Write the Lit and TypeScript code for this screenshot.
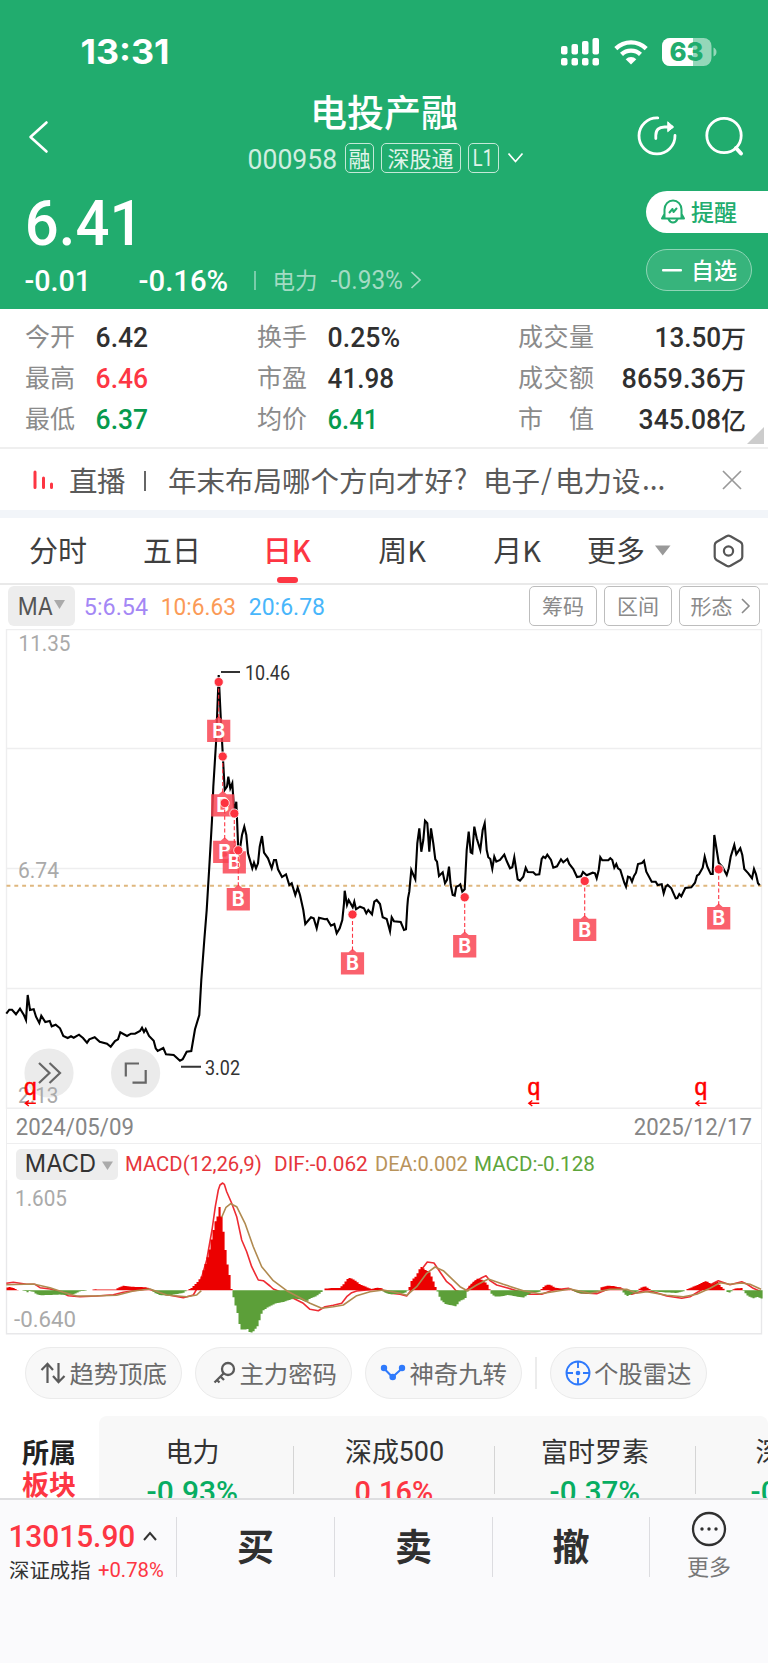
import { LitElement, html, svg, css } from "lit";
import { customElement, property } from "lit/decorators.js";

type Pt = [number, number];

const CAP = 0.711;

/** Numeric text condensed to a given ink width; the box is exactly cap-height tall. */
const fit = (text: string, width: number, size: number, cls = "") => {
  const h = Math.round(size * CAP);
  return html`<svg class="fit ${cls}" width=${width} height=${h}>
    <text x=${-size * 0.05} y=${h} font-size=${size} textLength=${width + size * 0.09} lengthAdjust="spacingAndGlyphs">${text}</text>
  </svg>`;
};

/** Chart series are stored in thirds of a pixel relative to an origin. */
const place = (ox: number, oy: number, raw: string): Pt[] =>
  raw.trim().split(/\s+/).map((p) => {
    const [x, y] = p.split(",").map(Number);
    return [ox + x / 3, oy + y / 3] as Pt;
  });
const toPoints = (pts: Pt[]) => pts.map(([x, y]) => `${x.toFixed(1)},${y.toFixed(1)}`).join(" ");

const PRICE: Pt[] = [
  ...place(0, 900, `19,341 28,329 36,329 48,343 60,326 72,346 78,360 83,285 90,330 101,328 108,350 118,369 124,347 136,366 149,363 155,379 167,374 180,385 190,408 203,414 213,409 221,413 237,404 249,414 261,428 268,418 284,412 299,425 321,431 332,440 345,423 354,418 361,397 381,408 393,401 405,401 420,393 426,383 432,396 437,387 447,408 461,422 467,445 473,453 490,444 498,463 521,465 540,482 548,478 560,455 574,453 585,388 598,345 604,240 613,120 620,30`),
  ...place(0, 620, `628,740 636,600 640,500 648,370 656,165 662,290 668,400 674,510 681,500 685,470 691,505 697,490 703,580 709,545 715,690 721,680 726,645 733,620 739,645 744,700 757,745 762,728 768,745 774,730 779,680 786,648 792,698 804,715 815,745 822,720 828,720 834,748 846,771 858,763 868,795 875,790 886,825 893,803 900,825 910,870`),
  ...place(0, 900, `916,72 933,52 941,55 950,85 957,53 975,58 981,57 993,77 1003,72 1010,100 1019,85 1027,60 1032,10`),
  ...place(0, 620, `1034,812 1041,855 1046,840 1058,862 1063,845 1068,868 1080,860 1092,865 1099,880 1105,870 1116,883 1123,845 1130,840 1140,852`),
  ...place(380, 900, `8,52 20,57 30,94 35,52 42,64 62,66 72,90 78,88 82,20`),
  ...place(380, 620, `84,835 88,815 94,750 106,778 112,670 118,625 124,695 130,660 135,602 142,610 148,695 153,625 160,670 166,718 171,725 177,768 188,757 195,790 201,780 207,740 212,795 218,825 224,827 229,800 236,797 241,793 247,815 254,808 260,690 266,635 272,697 277,700 283,620 290,655 301,690 308,630 314,610 320,690 325,712 331,717 337,746 343,710 349,725 360,720 373,704 380,723 390,745 397,742 403,712 413,778 420,782 430,770 437,743 443,756 460,757 467,764 478,763 485,717 490,710 496,714 502,704 513,720 520,743 531,739 543,718 550,727 562,717 568,732 580,747 591,771 603,769 609,756 620,766 638,758 645,760 650,775 656,750 661,712 667,721 685,721 691,715 697,720 703,743 709,732 714,745 721,750 733,788 738,800 744,770 750,772 756,785 762,768 768,758 774,732 786,729 792,722 799,755 815,785 827,785 833,795 845,793 851,820 857,800 863,795 874,805 887,835 892,834 898,822 904,829 916,804 934,802 945,788 951,767 957,763 968,743 974,710 982,740 992,762 998,762 1003,645 1010,690 1016,728 1028,742 1040,765 1046,745 1052,710 1063,675 1069,703 1081,685 1087,705 1093,747 1105,760 1116,775 1122,747 1128,763 1134,790 1139,796`),
];

const MARKS: Pt[] = [
  [218.7, 682], [222.7, 756.5], [224.7, 803], [234.3, 813.5], [238.3, 850.3],
  [352.5, 914.5], [464.7, 897.3], [584.7, 881], [718.7, 869.3],
];

const HIST: Pt[] = [
  ...place(0, 0, `19,8 30,10 45,5 55,0 78,-2 81,-8 85,-2 100,-4 110,-12 120,-15 180,-13 200,-14 225,-10 240,-3 270,0 285,3 320,2 345,2 360,10 372,14 390,11 440,9 452,2 465,-8 478,-14 500,-16 520,-13 550,-8 560,0 575,7 590,22 604,40 612,65 620,90 628,120 636,160 646,206 654,225 657,250 661,250 664,225 670,180 676,125 682,80 690,38 694,5 698,-5 702,-30 712,-65 718,-100 724,-118 738,-118 742,-115 748,-125 757,-127 766,-116 775,-105 782,-75 790,-60 805,-50 825,-40 850,-35 880,-25 900,-27 918,-35 930,-25 950,-17 965,-5 975,5 1000,7 1020,7 1032,20 1040,32 1050,38 1065,30 1080,18 1100,10 1115,3 1130,8`),
  ...place(380, 0, `5,6 12,-6 30,-12 60,-10 80,-6 88,8 96,32 108,42 118,62 122,72 135,62 148,55 155,40 163,20 168,5 173,-5 182,-28 197,-42 215,-45 228,-48 240,-32 256,-25 262,-5 267,12 280,25 292,35 310,30 322,18 328,5 332,-8 345,-19 365,-18 385,-14 400,-17 430,-22 450,-10 480,-4 485,5 498,16 510,17 525,8 545,4 570,2 585,-4 605,-10 650,-8 660,0 664,9 685,14 705,12 725,4 732,-10 742,-17 760,-10 774,-3 780,7 795,12 808,4 815,-3 850,-6 890,-8 910,-3 920,3 950,15 978,28 995,18 1012,26 1022,12 1032,3 1038,-2 1047,-8 1056,-2 1062,5 1085,7 1092,-4 1105,-18 1120,-24 1132,-20 1145,-25`),
];

const DIF: Pt[] = [
  ...place(0, 1140, `19,430 40,427 80,433 105,433 120,443 150,447 180,455 205,467 240,470 290,468 340,464 370,457 400,452 445,446 480,460 510,466 550,473 580,465 600,430 620,360 636,270 646,200 655,150 660,135 668,129 673,133 680,155 695,190 710,230 725,300 740,335 755,380 775,420 790,422 810,438 820,447 840,455 860,460 880,475 910,490 930,508 955,512 975,500 1000,496 1025,490 1040,470 1055,458 1070,453 1100,450 1140,447`),
  ...place(380, 1140, `30,460 60,463 80,468 90,455 110,420 130,382 142,366 162,369 180,396 200,425 215,437 228,452 250,458 265,445 285,425 305,413 318,407 330,422 350,435 380,443 410,452 440,463 485,463 520,450 565,445 600,458 650,461 690,445 720,443 755,463 790,452 820,455 860,468 905,475 930,470 955,455 980,440 1000,430 1015,422 1050,434 1085,425 1100,432 1120,445 1143,455`),
];
const DEA: Pt[] = [
  ...place(0, 1140, `19,434 100,432 150,443 190,457 230,468 280,468 350,466 400,453 450,447 500,465 560,470 590,465 604,452`),
  ...place(0, 1140, `665,232 678,202 692,191 710,200 735,250 760,320 785,380 820,422 860,452 900,473 930,490 965,505 1000,500 1030,495 1070,467 1110,455`),
  ...place(380, 1140, `10,450 60,460 80,466 110,440 140,400 165,381 190,392 240,440 262,452 290,435 325,417 370,433 430,452 480,461 520,455 570,447 630,460 690,448 740,448 770,460 800,455 860,466 910,470 950,463 990,445 1020,428 1050,433 1085,429 1110,433 1143,448`),
];

const heightAt = (x: number): number => {
  for (let i = 1; i < HIST.length; i++) {
    const [x1, y1] = HIST[i];
    const [x0, y0] = HIST[i - 1];
    if (x <= x1) return y0 + ((y1 - y0) * (x - x0)) / (x1 - x0);
  }
  return HIST[HIST.length - 1][1];
};
const ZERO = 1290.3;
const bars = (up: boolean): string => {
  let d = "";
  for (let x = 6.5; x < 761; x += 2) {
    const v = heightAt(x + 1);
    if (Math.abs(v) < 0.35 || v > 0 !== up) continue;
    d += `M${x} ${ZERO}V${(ZERO - v).toFixed(1)}h2.1V${ZERO}z`;
  }
  return d;
};

@customElement("price-chart")
class PriceChart extends LitElement {
  static styles = css`
    :host { display: block; height: 480px; }
    svg { display: block; font-family: Roboto, "Noto Sans", sans-serif; }
    .b { font-family: Inter, sans-serif; font-weight: 700; fill: #fff; font-size: 19.5px; text-anchor: middle; }
    .axis { fill: #aaa; font-size: 22.5px; }
    .tag { fill: #333; font-size: 20px; }
    .q { fill: #f00; stroke: #f00; stroke-width: 0.5; font-family: "Liberation Sans", sans-serif; font-size: 23px; text-anchor: middle; }
  `;
  render() {
    return html`<svg width="768" height="480" viewBox="0 629 768 480">
      <g fill="none" stroke="#eeeeef" stroke-width="1.4">
        <path d="M6.5 1109V629.5H761.5V1109M6.5 748.5H761.5M6.5 868.5H761.5M6.5 988.5H761.5M6.5 1108.3H761.5" />
      </g>
      <path d="M6.5 885.7H761.5" stroke="#dfb77e" stroke-width="2.1" stroke-dasharray="3.9 3.93" />
      <polyline points=${toPoints(PRICE)} fill="none" stroke="#000" stroke-width="2.1" stroke-linejoin="miter" stroke-miterlimit="6" />
      ${MARKS.map(([x, y]) => svg`
        <path d="M${x - 11.6} ${y + 37.8}h7.6l4 -3.6l4 3.6h7.6v22.3h-23.2z" fill="#f94351" fill-opacity=".84" />
        <path d="M${x} ${y}v36" stroke="#fd3643" stroke-width="1.1" stroke-dasharray="4 2.4" />
        <text class="b" x=${x} y=${y + 55.6}>B</text>
        <circle cx=${x} cy=${y} r="4.6" fill="#fd3340" stroke="#fff" stroke-width=".8" />`)}
      <path d="M221 672H240M181 1066.7H201" stroke="#333" stroke-width="2" />
      <g fill="#ebebeb">
        <circle cx="49" cy="1073" r="24.6" /><circle cx="135.6" cy="1073" r="24.6" />
      </g>
      <g fill="none" stroke="#666" stroke-width="2.2">
        <path d="M39 1063l10.500 10l-10.500 10M49.500 1063l10.500 10l-10.500 10" />
        <path d="M139 1063.500H125.800V1076.500M132.500 1082.600H145.700V1070" />
      </g>
      <text class="axis" x="18.500" y="651" textLength="52" lengthAdjust="spacingAndGlyphs">11.35</text>
      <text class="axis" x="18" y="877.500" textLength="41" lengthAdjust="spacingAndGlyphs">6.74</text>
      <text class="axis" x="18" y="1103" textLength="40.500" lengthAdjust="spacingAndGlyphs">2.13</text>
      <text class="tag" x="245" y="680" textLength="45" lengthAdjust="spacingAndGlyphs">10.46</text>
      <text class="tag" x="205" y="1075" textLength="35" lengthAdjust="spacingAndGlyphs">3.02</text>
      ${[30.3, 533.8, 701].map((x) => svg`
        <text class="q" x=${x} y="1094.600">q</text>
        <path d="M${x + 5.5} 1103.3H${x - 4}M${x - 1.5} 1100.5L${x - 5} 1103.3L${x - 1.5} 1106" fill="none" stroke="#f00" stroke-width="1.4" />`)}
    </svg>`;
  }
}

@customElement("macd-chart")
class MacdChart extends LitElement {
  static styles = css`
    :host { display: block; height: 155px; }
    svg { display: block; font-family: Roboto, sans-serif; }
    .axis { fill: #aaa; font-size: 22px; }
  `;
  render() {
    return html`<svg width="768" height="155" viewBox="0 1180 768 155">
      <path d="M6.500 1180V1333.700H761.500V1180" fill="none" stroke="#e8e8ea" stroke-width="1.400" />
      <g fill="none" stroke-width="1.600" stroke-linejoin="round">
        <polyline points=${toPoints(DIF)} stroke="#ee2b33" />
        <path d=${bars(true)} fill="#ec0000" /><path d=${bars(false)} fill="#5c9f39" />
        <polyline points=${toPoints(DEA.slice(0, 13))} stroke="#b08a50" />
        <polyline points=${toPoints(DEA.slice(13))} stroke="#b08a50" />
      </g>
      <text class="axis" x="15" y="1205.800" textLength="52" lengthAdjust="spacingAndGlyphs">1.605</text>
      <text class="axis" x="14" y="1327" textLength="62" lengthAdjust="spacingAndGlyphs">-0.640</text>
    </svg>`;
  }
}

@customElement("stat-item")
class StatItem extends LitElement {
  @property() label = "";
  @property() value = "";
  @property() unit = "";
  @property() tone = "";
  @property({ type: Number }) w = 50;
  @property({ type: Boolean }) wide = false;
  static styles = css`
    :host { display: flex; align-items: center; height: 41px; line-height: 38px; }
    .label { width: 50px; margin-left: -1px; margin-right: 22px; font-size: 25px; color: #8b8b8b; white-space: nowrap; display: flex; justify-content: space-between; padding-bottom: 3px; }
    :host([wide]) .label { width: 76px; }
    .value { display: flex; align-items: center; fill: #303030; color: #303030; padding-top: 1px; }
    :host([wide]) .value { margin-left: auto; }
    .unit { font-size: 25px; font-weight: 500; margin-left: 1px; margin-right: -1px; line-height: 38px; }
    .up { fill: #fd3643; }
    .down { fill: #069a4e; }
    .fit { display: block; overflow: visible; font-family: Roboto, sans-serif; font-weight: 500; }
  `;
  render() {
    return html`<span class="label">${[...this.label].map((c) => html`<span>${c}</span>`)}</span>
      <span class="value ${this.tone}">${fit(this.value, this.w, 28)}${this.unit ? html`<span class="unit">${this.unit}</span>` : ""}</span>`;
  }
}

@customElement("app-root")
class AppRoot extends LitElement {
  static styles = css`
    :host { display: block; width: 768px; height: 1663px; overflow: hidden; background: #fff; font-family: "Noto Sans CJK SC", "Noto Sans", sans-serif; color: #333; box-sizing: border-box; }
    * { box-sizing: border-box; }
    svg { display: block; flex: none; overflow: visible; }
    .fit { font-family: Roboto, sans-serif; fill: currentColor; }
    .med { font-weight: 500; }
    .row { display: flex; align-items: center; }

    .head { height: 309px; background: #21ac6e; color: #fff; display: flex; flex-direction: column; }
    .status { height: 90px; padding: 13px 51px 0 82px; justify-content: space-between; }
    .sys { gap: 14px; }
    .nav { display: grid; grid-template-columns: 120px 1fr 120px; height: 90px; }
    .back { padding: 30px 0 0 28px; }
    .heading { display: flex; flex-direction: column; align-items: center; }
    .name { font-size: 37px; line-height: 42px; height: 51px; font-weight: 500; }
    .code { gap: 8px; height: 33px; padding-left: 5px; }
    .code .num { color: #d0eee0; margin-right: 1px; margin-top: 3px; }
    .badge { height: 30px; border: 1.5px solid #c4e9d8; border-radius: 5px; font-size: 22px; line-height: 24px; padding: 0 2px 2px; color: #e0f4ea; display: flex; align-items: center; justify-content: center; }
    .badge.wide { padding: 0 6px 2px; margin-left: -1px; }
    .badge.lv { width: 31px; margin-left: -1px; padding-bottom: 0; }
    .tools { display: flex; justify-content: flex-end; gap: 27px; padding: 26px 24px 0 0; margin-left: -20px; }
    .quote { display: flex; justify-content: space-between; flex: 1; }
    .left { padding: 20px 0 0 26px; }
    .left .price { margin-left: 2px; }
    .change { margin-top: 18px; height: 34px; }
    .sep { width: 1.5px; height: 19px; background: #7accaa; margin: 0 17px 0 27px; }
    .sector { font-size: 22.5px; line-height: 30px; color: #a3dbc3; gap: 14px; padding-bottom: 3px; }
    .sector svg.fit { margin-top: 3px; }
    .sector .go { margin-left: -6px; margin-top: 2px; }
    .gap { width: 50px; }
    .right { width: 122px; padding-top: 11px; display: flex; flex-direction: column; gap: 17px; }
    .remind { height: 42px; background: #fff; color: #21ac6e; border-radius: 21px 0 0 21px; padding: 0 0 2px 14px; gap: 5px; font-size: 23px; line-height: 36px; font-weight: 500; }
    .own { width: 106px; height: 42px; margin-top: -1px; border: 1.5px solid #8fd5b6; background: #37b47c; border-radius: 21px; padding: 0 0 2px 15px; gap: 9px; font-size: 23px; line-height: 36px; font-weight: 500; }

    .stats { display: grid; grid-template-columns: 232px 261px 226px; padding: 7px 0 0 26px; height: 140px; border-bottom: 2px solid #efefef; align-content: start; position: relative; }
    .corner { position: absolute; right: 4px; bottom: 3px; }
    .live { height: 61px; padding: 0 27px 0 32px; font-size: 28.5px; color: #5a5a5a; white-space: pre; line-height: 56px; }
    .live .tag { margin-left: 15px; letter-spacing: -0.5px; }
    .live .bar { width: 2px; height: 20px; background: #666; margin: 2px 22px 0 19px; }
    .live .msg { flex: 1; display: flex; }
    .band { height: 8px; background: #f2f5f9; }

    .tabs { height: 67px; border-bottom: 2px solid #e9e9e9; padding: 0 24px 0 29px; font-size: 29px; color: #3f3f3f; }
    .tab { height: 65px; line-height: 63px; display: flex; flex-direction: column; align-items: center; width: 58px; white-space: nowrap; margin-left: 57px; }
    .tab:first-child { margin-left: 0; }
    .tab.next { margin-left: 56px; }
    .tab.drop { margin-left: 41px; margin-right: 10px; }
    .tab.on { color: #fd3643; font-weight: 500; }
    .tab.on::after { content: ""; width: 21px; height: 6px; border-radius: 3px; background: #fd3643; margin-top: -4px; flex: none; }
    .cog { margin-left: auto; }
    .ma { height: 44px; padding: 1px 8px 3px 8px; gap: 10px; }
    .pick { width: 67px; height: 40px; border-radius: 6px; background: #ededed; color: #555; display: flex; align-items: center; justify-content: center; gap: 2px; }
    .pick .caret { margin-top: -3px; }
    .inter { font-family: Inter, sans-serif; }
    .v5 { color: #a487f5; margin-right: 5px; }
    .v10 { color: #fb9a57; margin-right: 5px; }
    .v20 { color: #48b6fb; }
    .outs { margin-left: auto; display: flex; gap: 7px; }
    .out { width: 68px; height: 40px; border: 1.5px solid #bdbdbd; border-radius: 5px; font-size: 21px; color: #8a8a8a; line-height: 33px; padding-bottom: 2px; display: flex; align-items: center; justify-content: center; gap: 8px; }
    .out.more { width: 81px; }
    .out.more svg { margin: 2px -1px 0 0; }
    .dates { margin: 0 6px; padding: 2px 10px 0; height: 35px; border: solid #eeeeef; border-width: 0 1.4px 1.4px; justify-content: space-between; color: #868686; }
    .ind { margin: 0 6px; height: 36px; padding: 4px 0 0 9px; border: solid #eeeeef; border-width: 0 1.4px; gap: 8px; }
    .mpick { width: 102px; height: 31px; border-radius: 5px; background: #ededed; color: #333; display: flex; align-items: center; padding: 0 0 1px 10px; gap: 7px; }
    .mpick .caret { margin-top: 3px; }
    .ind .a { color: #e6353b; } .ind .c { color: #b8935a; } .ind .d { color: #5da53b; }
    .ind .dif { margin-left: 6px; margin-right: 1px; }

    .pills { padding: 12px 0 0 25px; height: 81px; align-items: flex-start; gap: 13px; }
    .pill { width: 157px; height: 52px; border-radius: 26px; border: 1.5px solid #ebebeb; background: #f8f8f8; font-size: 24.4px; line-height: 46px; color: #6b6b6b; display: flex; align-items: center; justify-content: flex-end; padding: 0 14px 1px 0; gap: 3px; white-space: nowrap; }
    .vsep { width: 1.5px; height: 32px; background: #ececec; margin: 10px 0 0; }
    .sectors { height: 82px; display: flex; overflow: hidden; }
    .own-t { width: 99px; padding: 20px 0 0 22px; font-weight: 700; font-size: 27px; line-height: 32px; color: #222; flex: none; }
    .panel { flex: 1; background: #f8f8f8; border-radius: 8px 8px 0 0; overflow: hidden; display: flex; }
    .items { display: flex; margin-left: -7px; flex: none; }
    .it { width: 201px; flex: none; display: flex; flex-direction: column; align-items: center; font-size: 27px; line-height: 36px; padding-top: 17px; }
    .it .nm { height: 48px; display: flex; align-items: center; gap: 1px; padding-bottom: 12px; }
    .it + .it { border-image: linear-gradient(to bottom, transparent 30px, #d5d5d5 30px, #d5d5d5 77px, transparent 77px) 1; border-style: solid; border-width: 0 0 0 1.5px; }
    .g { color: #08ad62; } .r { color: #fd3643; }

    .bar-b { height: 165px; background: #fafafc; border-top: 2px solid #dedee0; display: flex; padding-top: 17px; }
    .idx { width: 176px; height: 60px; padding: 7px 0 0 10px; flex: none; }
    .idx .top { gap: 9px; }
    .idx .bot { margin-top: 7px; font-size: 20.4px; line-height: 30px; gap: 8px; margin-left: -1px; }
    .act { width: 158px; height: 60px; border-left: 1.5px solid #dcdce0; font-size: 37px; line-height: 57px; font-weight: 700; text-align: center; color: #303030; }
    .act.last { width: 157px; }
    .morebtn { flex: 1; height: 60px; border-left: 1.5px solid #dcdce0; display: flex; flex-direction: column; align-items: center; font-size: 22px; color: #777; line-height: 32px; }
    .morebtn svg { margin: -6px 0 2px; }
  `;

  render() {
    return html`
      <div class="head">
        <div class="status row">
          <svg width="88" height="26"><text x="-1.500" y="25" font-family="Inter" font-weight="700" font-size="33.500" fill="#fff" textLength="89" lengthAdjust="spacingAndGlyphs">13:31</text></svg>
          <div class="sys row">
            <svg width="39" height="28" fill="#fff">
              <rect x="0" y="8" width="6.500" height="8.500" rx="2" /><rect x="10.500" y="6" width="6.500" height="10.500" rx="2" /><rect x="21" y="3" width="6.500" height="13.500" rx="2" /><rect x="31.500" y="0" width="6.500" height="16.500" rx="2" />
              <rect x="0" y="20" width="6.500" height="7.500" rx="2" /><rect x="10.500" y="20" width="6.500" height="7.500" rx="2" /><rect x="21" y="20" width="6.500" height="7.500" rx="2" /><rect x="31.500" y="20" width="6.500" height="7.500" rx="2" />
            </svg>
            <svg width="34" height="26" viewBox="0 0 34 26" fill="none" stroke="#fff" stroke-width="4.300">
              <path d="M1.800 9.600A21.800 21.800 0 0 1 32.200 9.600" /><path d="M7.500 15.400A13.600 13.600 0 0 1 26.500 15.400" />
              <path d="M17 25.500L11.700 20.200A7.600 7.600 0 0 1 22.300 20.200z" fill="#fff" stroke="none" />
            </svg>
            <svg width="55" height="28" viewBox="0 0 55 28">
              <rect width="49.500" height="28" rx="8" fill="#fff" fill-opacity=".52" />
              <path d="M8 0H31V28H8A8 8 0 0 1 0 20V8A8 8 0 0 1 8 0z" fill="#fff" />
              <path d="M51.500 9.500Q54.500 11 54.500 14T51.500 18.500z" fill="#fff" fill-opacity=".52" />
              <text x="7.500" y="23.300" font-family="Inter" font-weight="800" font-size="26" fill="#21ac6e" textLength="34" lengthAdjust="spacingAndGlyphs">63</text>
            </svg>
          </div>
        </div>
        <div class="nav">
          <div class="back"><svg width="22" height="34" fill="none" stroke="#fff" stroke-width="2.600" stroke-linecap="round" stroke-linejoin="round"><path d="M18.500 2.500L2.500 17L18.500 31.500" /></svg></div>
          <div class="heading">
            <div class="name">电投产融</div>
            <div class="code row">
              ${fit("000958", 87, 28, "num")}
              <span class="badge">融</span><span class="badge wide">深股通</span><span class="badge lv">${fit("L1", 18, 23)}</span>
              <svg width="17" height="12" fill="none" stroke="#fff" stroke-width="1.700"><path d="M1.500 1.500L8.500 9.500L15.500 1.500" /></svg>
            </div>
          </div>
          <div class="tools">
            <svg width="40" height="40" fill="none" stroke="#fff" stroke-width="2.800" stroke-linecap="round" stroke-linejoin="round">
              <path d="M20.800 1.900A18 18 0 1 0 38 19.500" /><path d="M18.800 22.500V19.500Q18.800 11 27.500 11H35" /><path d="M31 6L36.500 11L31 15.500z" fill="#fff" stroke-width="1" />
            </svg>
            <svg width="40" height="40" fill="none" stroke="#fff" stroke-width="2.800" stroke-linecap="round"><circle cx="20" cy="19.500" r="17.200" /><path d="M32 32L37 37.500" stroke-width="4" /></svg>
          </div>
        </div>
        <div class="quote">
          <div class="left">
            ${fit("6.41", 113, 63.5, "med price")}
            <div class="change row">
              ${fit("-0.01", 64, 29.5, "med")}<span class="gap"></span>${fit("-0.16%", 87, 29.5, "med")}
              <span class="sep"></span>
              <div class="sector row"><span>电力</span>${fit("-0.93%", 70, 25)}<svg class="go" width="12" height="18" fill="none" stroke="#a3dbc3" stroke-width="1.700"><path d="M1.500 1L10 9L1.500 17" /></svg></div>
            </div>
          </div>
          <div class="right">
            <div class="remind row">
              <svg width="26" height="26" fill="none" stroke="#21ac6e" stroke-width="2" stroke-linejoin="round" stroke-linecap="round">
                <path d="M4.500 20V11.500A8.500 9 0 0 1 21.500 11.500V20M2 20.500H24M4.500 16L2 20.500M21.500 16L24 20.500" /><path d="M8.500 21Q10 24.500 13 24.500T17.500 21" /><path d="M9.500 14.500L12.500 11L13.500 14L16.500 10.500" />
              </svg>提醒
            </div>
            <div class="own row"><svg width="20" height="3"><rect width="20" height="2.400" y="1" rx="1" fill="#fff" /></svg>自选</div>
          </div>
        </div>
      </div>

      <div class="stats">
        <stat-item label="今开" value="6.42" w="50"></stat-item><stat-item label="换手" value="0.25%" w="70"></stat-item><stat-item wide label="成交量" value="13.50" w="64" unit="万"></stat-item>
        <stat-item label="最高" value="6.46" w="50" tone="up"></stat-item><stat-item label="市盈" value="41.98" w="64"></stat-item><stat-item wide label="成交额" value="8659.36" w="97" unit="万"></stat-item>
        <stat-item label="最低" value="6.37" w="50" tone="down"></stat-item><stat-item label="均价" value="6.41" w="48" tone="down"></stat-item><stat-item wide label="市值" value="345.08" w="80" unit="亿"></stat-item>
        <svg class="corner" width="17" height="17"><path d="M17 0V17H0z" fill="#ccc" /></svg>
      </div>

      <div class="live row">
        <svg width="22" height="20" stroke="#fd3643" stroke-width="3" stroke-linecap="round"><path d="M3 2V17.500M11.500 8V17.500M19.500 14V17.500" /></svg>
        <span class="tag">直播</span><span class="bar"></span>
        <span class="msg"><span>年末布局哪个方向才好</span>${cell("?", 30, 28)}<span>电子</span>${cell("/", 15, 28)}<span>电力设</span>${cell("...", 30, 28)}</span>
        <svg width="18" height="18" stroke="#999" stroke-width="1.700"><path d="M0 0L18 18M18 0L0 18" /></svg>
      </div>
      <div class="band"></div>

      <div class="tabs row">
        <div class="tab">分时</div><div class="tab next">五日</div><div class="tab on">日K</div><div class="tab">周K</div><div class="tab">月K</div><div class="tab drop">更多</div>
        <svg width="16" height="11"><path d="M0 0.500H15.500L7.700 10.500z" fill="#999" /></svg>
        <svg class="cog" width="31" height="34" fill="none" stroke="#555" stroke-width="2.200" stroke-linejoin="round"><path d="M13.500 2.200Q15.500 1.200 17.500 2.200L27.500 8Q29.300 9.200 29.300 11.200V22.800Q29.300 24.800 27.500 26L17.500 31.800Q15.500 32.800 13.500 31.800L3.500 26Q1.700 24.800 1.700 22.800V11.200Q1.700 9.200 3.500 8z" /><circle cx="15.500" cy="17" r="4.600" /></svg>
      </div>
      <div class="ma row">
        <div class="pick">${fit("MA", 33, 24.5, "inter")}<svg class="caret" width="11" height="9"><path d="M0 0H11L5.500 9z" fill="#aaa" /></svg></div>
        ${fit("5:6.54", 62, 24, "v5")}${fit("10:6.63", 73, 24, "v10")}${fit("20:6.78", 74, 24, "v20")}
        <div class="outs"><div class="out">筹码</div><div class="out">区间</div><div class="out more">形态<svg width="9" height="16" fill="none" stroke="#8a8a8a" stroke-width="1.600"><path d="M1 1L8 8L1 15" /></svg></div></div>
      </div>
      <price-chart></price-chart>
      <div class="dates row">${fit("2024/05/09", 116, 23)}${fit("2025/12/17", 116, 23)}</div>
      <div class="ind row">
        <div class="mpick">${fit("MACD", 69, 24, "inter")}<svg class="caret" width="11" height="9"><path d="M0 0.500H11L5.500 9z" fill="#aaa" /></svg></div>
        ${fit("MACD(12,26,9)", 135, 20, "a")}${fit("DIF:-0.062", 92, 20, "a dif")}${fit("DEA:0.002", 91, 20, "c")}${fit("MACD:-0.128", 119, 20, "d")}
      </div>
      <macd-chart></macd-chart>

      <div class="pills row">
        <div class="pill"><svg width="26" height="22" fill="none" stroke="#5a5a5a" stroke-width="2.200"><path d="M7.500 21V2M1.500 8L7.500 1.800L13 8M18.500 1V20M13 14L18.500 20.200L24.500 14" /></svg>趋势顶底</div>
        <div class="pill"><svg width="23" height="23" fill="none" stroke="#5a5a5a" stroke-width="2.300"><circle cx="15" cy="8" r="6" /><path d="M10.500 12.500L1.500 21.500M7.500 15.500L11 19M4 19L6.500 21.500" /></svg>主力密码</div>
        <div class="pill"><svg width="26" height="18" fill="#2f7afc"><path d="M4 4.500L12.500 13L22 4.500" fill="none" stroke="#2f7afc" stroke-width="2" /><circle cx="4" cy="4" r="3.200" /><circle cx="12.700" cy="13" r="3.300" /><circle cx="22" cy="4" r="3.200" /></svg>神奇九转</div>
        <span class="vsep"></span>
        <div class="pill"><svg width="26" height="26" fill="none" stroke="#2f7afc" stroke-width="1.900"><circle cx="13" cy="13" r="11.500" /><path d="M13 1.500V8M13 18V24.500M1.500 13H8M18 13H24.500" /><circle cx="13" cy="13" r="2.300" fill="#2f7afc" stroke="none" /></svg>个股雷达</div>
      </div>

      <div class="sectors">
        <div class="own-t"><div>所属</div><div class="r">板块</div></div>
        <div class="panel"><div class="items">
          <div class="it"><div class="nm">电力</div>${fit("-0.93%", 89, 29, "med g")}</div>
          <div class="it"><div class="nm">深成${fit("500", 43, 28)}</div>${fit("0.16%", 76, 29, "med r")}</div>
          <div class="it"><div class="nm">富时罗素</div>${fit("-0.37%", 88, 29, "med g")}</div>
          <div class="it"><div class="nm">深股通</div>${fit("-0.21%", 88, 29, "med g")}</div>
        </div></div>
      </div>

      <div class="bar-b">
        <div class="idx">
          <div class="top row r">${fit("13015.90", 124, 32, "med")}<svg width="14" height="10" fill="none" stroke="#333" stroke-width="2"><path d="M1 9L7 2L13 9" /></svg></div>
          <div class="bot row"><span>深证成指</span><span class="r">${fit("+0.78%", 64, 21)}</span></div>
        </div>
        <div class="act">买</div><div class="act">卖</div><div class="act last">撤</div>
        <div class="morebtn"><svg width="36" height="36" fill="none" stroke="#303030" stroke-width="2.300"><circle cx="18" cy="18" r="16" /><g fill="#303030" stroke="none"><circle cx="11" cy="18" r="1.700" /><circle cx="18" cy="18" r="1.700" /><circle cx="25" cy="18" r="1.700" /></g></svg><span>更多</span></div>
      </div>
    `;
  }
}

/** Punctuation kept to a fixed cell so that the headline keeps its rhythm. */
function cell(text: string, width: number, size: number) {
  return html`<svg width=${width} height="56" fill="#5a5a5a"><text x="1" y="38" font-family="Noto Sans CJK SC" font-size=${size}>${text}</text></svg>`;
}
